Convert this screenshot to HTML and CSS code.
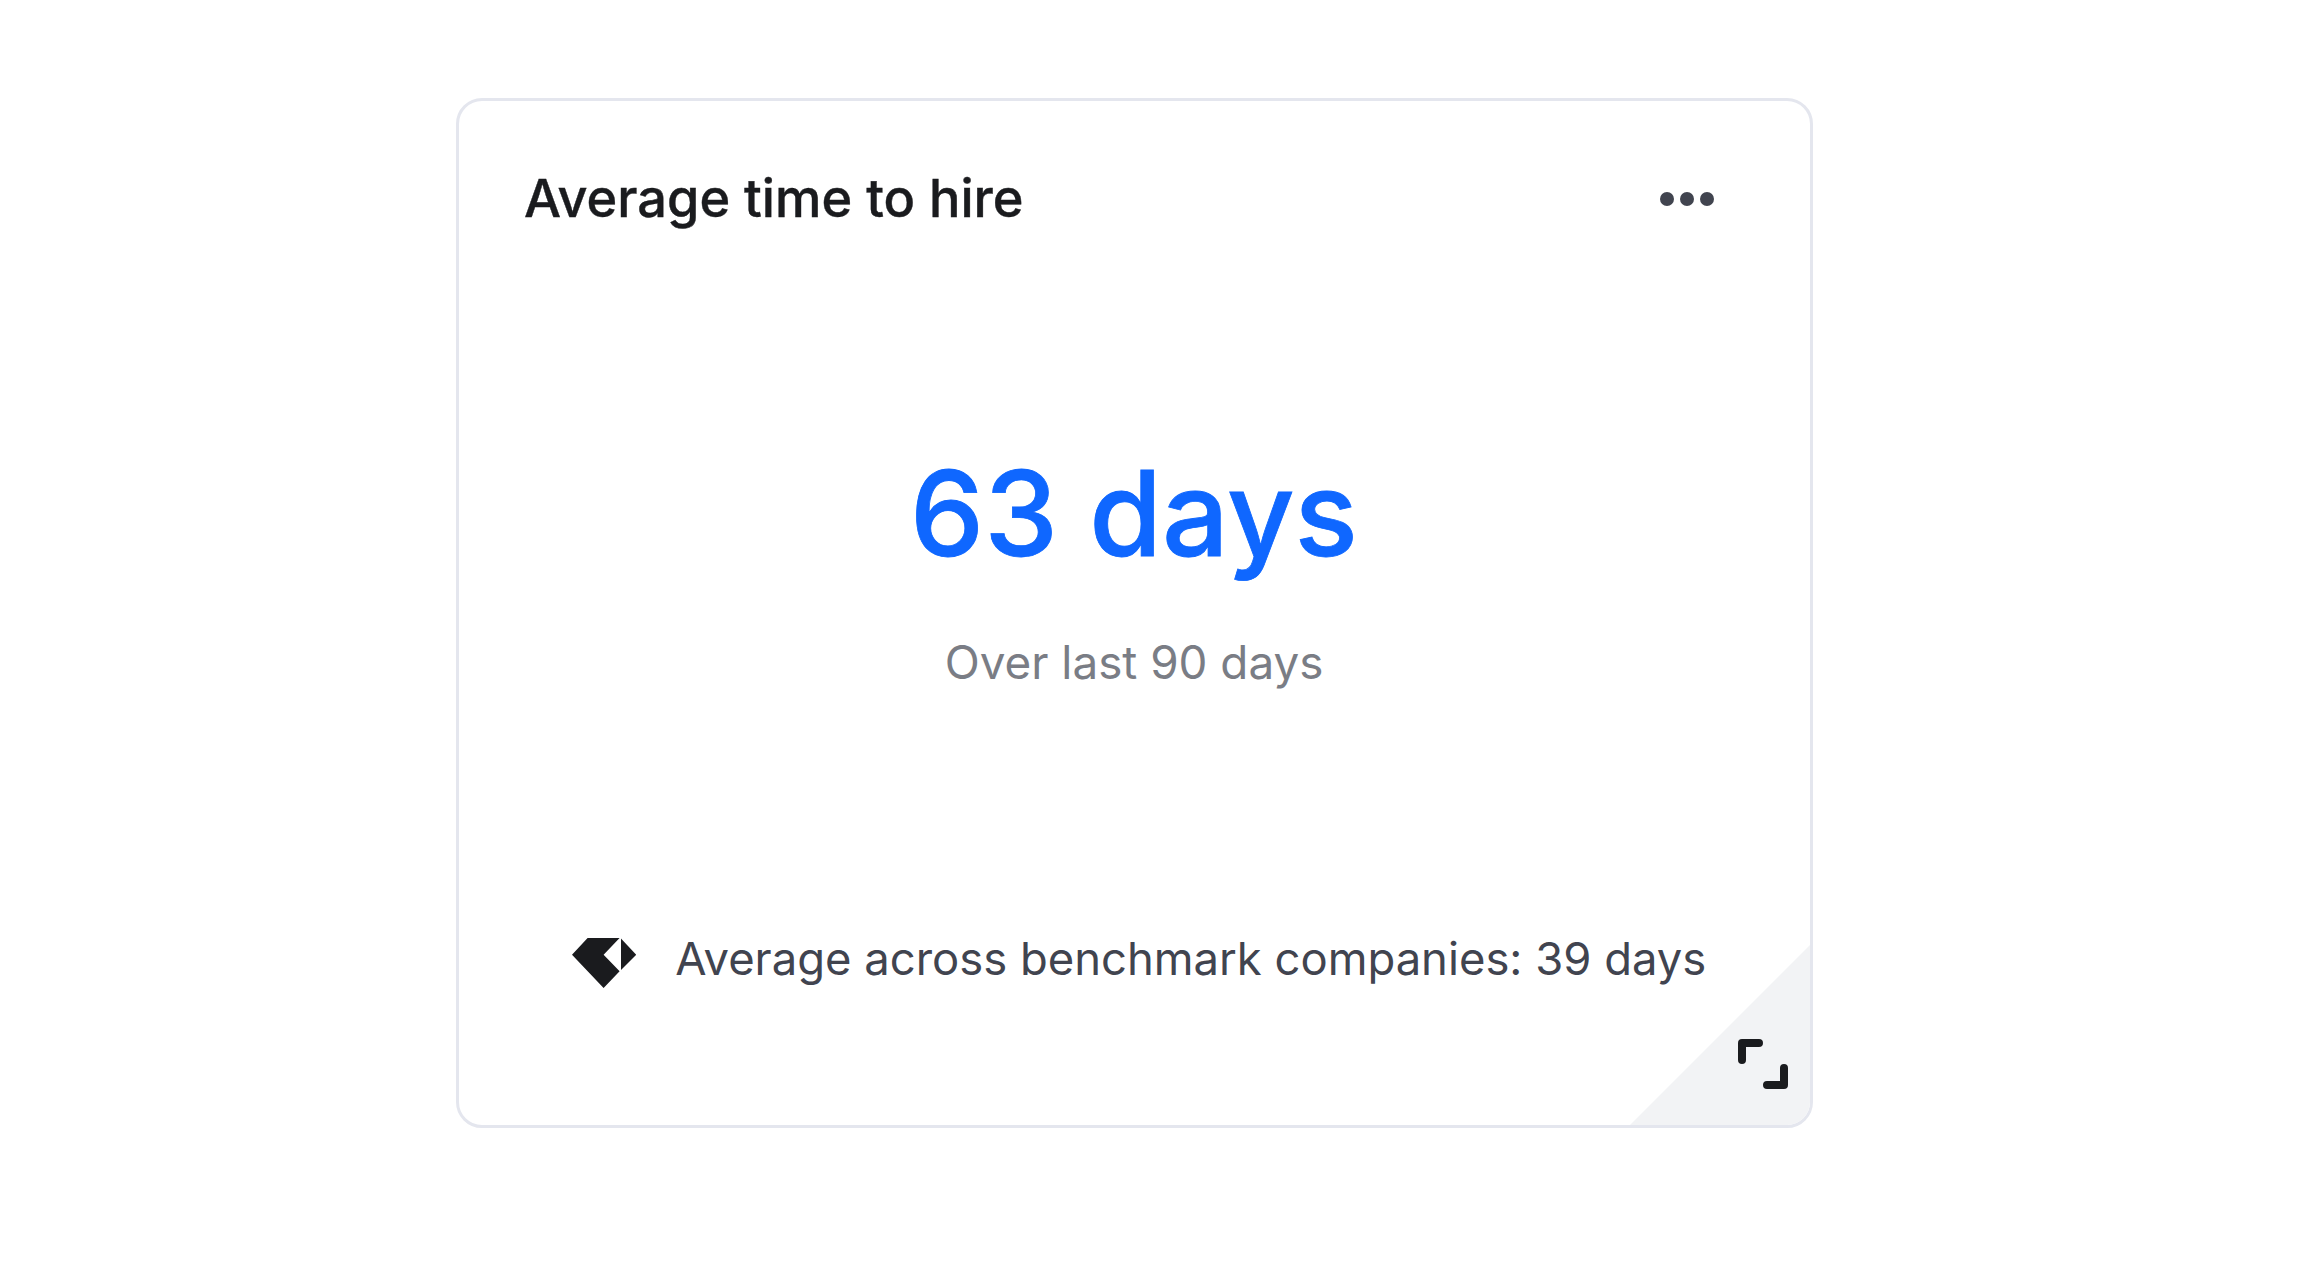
FILE: index.html
```html
<!DOCTYPE html>
<html lang="en">
<head>
    <meta charset="UTF-8">
    <title>Average time to hire</title>
    <link rel="stylesheet" href="styles.css">
</head>
<body>
    <div class="card">
        <div class="card-head">
            <h2 class="card-title">Average time to hire</h2>
            <span class="more"><span></span><span></span><span></span></span>
        </div>
        <div class="metric">
            <div class="metric-value">63 days</div>
            <div class="metric-label">Over last 90 days</div>
        </div>
        <div class="benchmark">
            <svg class="gem" viewBox="0 0 64.300 50" width="64.300" height="50">
                <path fill="#1a1b1e" d="M0 16.700L15.600 0H47.600L31.600 16.700L47.600 33.300L31.600 50Z"/>
                <path fill="#1a1b1e" d="M49 .5L64.300 16.700L49 32Z"/>
            </svg>
            <span class="benchmark-text">Average across benchmark companies: 39 days</span>
        </div>
        <div class="corner"></div>
        <svg class="expand" viewBox="0 0 50 50" width="50" height="50">
            <path fill="none" stroke="#1a1b1e" stroke-width="8" stroke-linecap="round" stroke-linejoin="round" d="M4 21V4H21M46 29V46H29"/>
        </svg>
    </div>
</body>
</html>
```

FILE: styles.css
```css
body {
    margin: 0;
    padding: 98px 0 0 456px;
    background: #fff;
    font-family: Inter, "Liberation Sans", sans-serif;
}

.card {
    position: relative;
    box-sizing: border-box;
    display: flex;
    flex-direction: column;
    width: 1357px;
    height: 1030px;
    padding: 0 96px 0 65px;
    border: 3px solid #e4e6ee;
    border-radius: 26px;
    overflow: hidden;
}

.card-head {
    display: flex;
    align-items: center;
    justify-content: space-between;
    height: 194px;
}

.card-title {
    margin: 0;
    font-size: 52.300px;
    font-weight: 500;
    color: #1a1b1e;
    -webkit-text-stroke: .4px #1a1b1e;
}

.more {
    display: flex;
    gap: 6px;
    margin-top: 2px;
}

.more span {
    width: 14px;
    height: 14px;
    border-radius: 50%;
    background: #41444f;
}

.metric {
    display: flex;
    flex-direction: column;
    align-items: center;
    padding-top: 148px;
    margin-left: 30px;
}

.metric-value {
    font-size: 117.600px;
    font-weight: 500;
    line-height: 140px;
    color: #0f67ff;
    -webkit-text-stroke: .8px #0f67ff;
}

.metric-label {
    margin-top: 53px;
    font-size: 45.800px;
    line-height: 54px;
    color: #7a7d85;
}

.benchmark {
    display: flex;
    align-items: center;
    gap: 39px;
    margin-top: 240px;
    padding-left: 48px;
}

.gem {
    margin-top: 8px;
}

.benchmark-text {
    font-size: 45.400px;
    line-height: 54px;
    color: #41444f;
}

.corner {
    position: absolute;
    right: 0;
    bottom: 0;
    width: 180px;
    height: 180px;
    background: #f2f3f5;
    clip-path: polygon(100% 0, 100% 100%, 0 100%);
}

.expand {
    position: absolute;
    right: 22px;
    bottom: 36px;
}
```
